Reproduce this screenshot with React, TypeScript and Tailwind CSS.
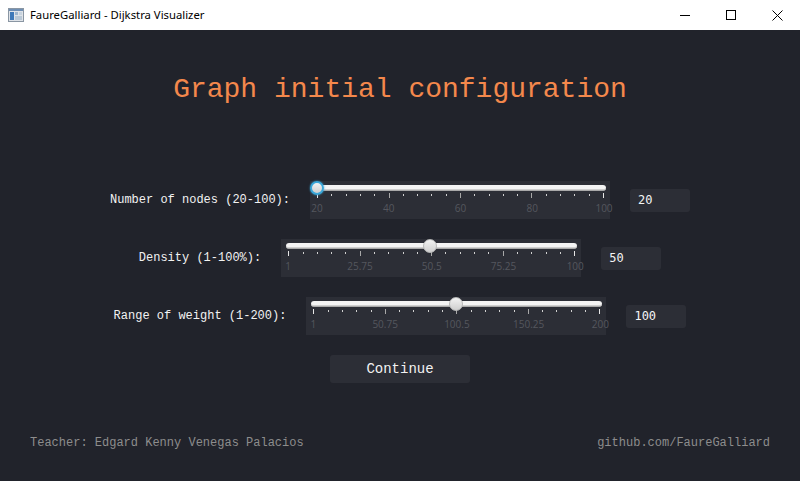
import { useState } from "react";

type SliderCfg = {
	label: string;
	min: number;
	max: number;
	value: number;
	marks: string[];
	focused?: boolean;
};

const SLIDERS: SliderCfg[] = [
	{ label: "Number of nodes (20-100):", min: 20, max: 100, value: 20, marks: ["20", "40", "60", "80", "100"], focused: true },
	{ label: "Density (1-100%):", min: 1, max: 100, value: 50, marks: ["1", "25.75", "50.5", "75.25", "100"] },
	{ label: "Range of weight (1-200):", min: 1, max: 200, value: 100, marks: ["1", "50.75", "100.5", "150.25", "200"] },
];

const MONO = "font-['Liberation_Mono','Courier_New',monospace]";

function TitleBar() {
	return (
		<div className="h-[30px] bg-white flex items-center select-none">
			<svg width="16" height="14" viewBox="0 0 16 14" className="ml-[8px] mr-[6px]">
				<rect x="0.5" y="0.5" width="15" height="13" fill="#dfe3e8" stroke="#8a96a3" />
				<rect x="1" y="1" width="14" height="2" fill="#6f8fb4" />
				<rect x="2" y="4" width="4" height="8" fill="#3f79b8" />
				<rect x="7" y="4" width="3" height="3" fill="#9fb7cf" />
				<rect x="11" y="4" width="3" height="3" fill="#c7d3de" />
				<rect x="7" y="8" width="7" height="4" fill="#b9c8d6" />
			</svg>
			<span className="text-[11.3px] text-black font-['Noto_Sans',sans-serif]">
				FaureGalliard - Dijkstra Visualizer
			</span>
			<div className="ml-auto flex h-full">
				<div className="w-[46px] h-full flex items-center justify-center">
					<div className="w-[10px] h-px bg-black" />
				</div>
				<div className="w-[46px] h-full flex items-center justify-center">
					<div className="w-[10px] h-[10px] border border-black" />
				</div>
				<div className="w-[46px] h-full flex items-center justify-center">
					<svg width="11" height="11" viewBox="0 0 11 11">
						<path d="M0.5 0.5 L10.5 10.5 M10.5 0.5 L0.5 10.5" stroke="#000" strokeWidth="1" />
					</svg>
				</div>
			</div>
		</div>
	);
}

function Slider({ cfg }: { cfg: SliderCfg }) {
	const pct = ((cfg.value - cfg.min) / (cfg.max - cfg.min)) * 100;
	const ticks = Array.from({ length: 21 }, (_, i) => i);
	return (
		<div className="relative w-[300px] h-[38px] bg-[#2c2e36]">
			{/* track */}
			<div className="absolute left-[5px] right-[4px] top-[4px] h-[6px] rounded-full bg-[#f4f4f4] border-b border-[#a9a9a9] shadow-[inset_0_-1px_0_#cfcfcf]" />
			{/* ticks */}
			<div className="absolute left-[7px] right-[6px] top-[12px] flex justify-between items-start">
				{ticks.map((i) => (
					<div
						key={i}
						className={
							i % 5 === 0
								? i === 0 || i === 20
									? "w-px h-[5px] bg-[#e6e6e6]"
									: "w-px h-[5px] bg-[#a8a8a8]"
								: "w-px h-[2px] mt-[1px] bg-[#d0d0d0]"
						}
					/>
				))}
			</div>
			{/* marks */}
			<div className="absolute left-[7px] right-[6px] top-[21px] h-[12px]">
				{cfg.marks.map((m, i) => (
					<span
						key={m}
						className="absolute -translate-x-1/2 text-[10px] leading-[12px] text-[#55575e] font-['Open_Sans',sans-serif]"
						style={{ left: `${i * 25}%` }}
					>
						{m}
					</span>
				))}
			</div>
			{/* thumb */}
			<div className="absolute left-[7px] right-[6px] top-0 h-[14px]">
				<div
					className={
						"absolute top-0 w-[14px] h-[14px] -translate-x-1/2 rounded-full bg-gradient-to-b from-[#f2f2f2] to-[#cfcfcf] " +
						(cfg.focused
							? "border-2 border-[#3aa7d9] shadow-[0_0_2px_#3aa7d9]"
							: "border border-[#b8b8b8]")
					}
					style={{ left: `${pct}%` }}
				/>
			</div>
		</div>
	);
}

export default function App() {
	const [values] = useState(SLIDERS.map((s) => s.value));

	return (
		<div className="w-[800px] h-[481px] flex flex-col bg-[#21232b] overflow-hidden">
			<TitleBar />

			<div className="flex-1 flex flex-col items-center pt-[42px]">
				<h1 className={`${MONO} text-[28px] leading-[36px] text-[#f4884c]`}>Graph initial configuration</h1>

				<div className="mt-[73px] flex flex-col items-center gap-5">
					{SLIDERS.map((s, i) => (
						<div key={s.label} className="flex items-center gap-5">
							<span className={`${MONO} text-[12px] text-[#f2f2f2] whitespace-pre`}>{s.label}</span>
							<Slider cfg={s} />
							<div className="w-[60px] h-[23px] rounded-[3px] bg-[#2c2e36] flex items-center pl-[8px]">
								<span className="text-[12px] text-[#f4f4f4] font-['DejaVu_Sans_Mono',monospace]">{values[i]}</span>
							</div>
						</div>
					))}

					<button
						className={`${MONO} w-[140px] h-[28px] rounded-[3px] bg-[#2c2e36] text-[14px] text-[#f2f2f2]`}
					>
						Continue
					</button>
				</div>

				<div className={`${MONO} mt-auto mb-[29px] w-full px-[30px] flex justify-between text-[12px] text-[#8d8d8d]`}>
					<span>Teacher: Edgard Kenny Venegas Palacios</span>
					<span>github.com/FaureGalliard</span>
				</div>
			</div>
		</div>
	);
}
